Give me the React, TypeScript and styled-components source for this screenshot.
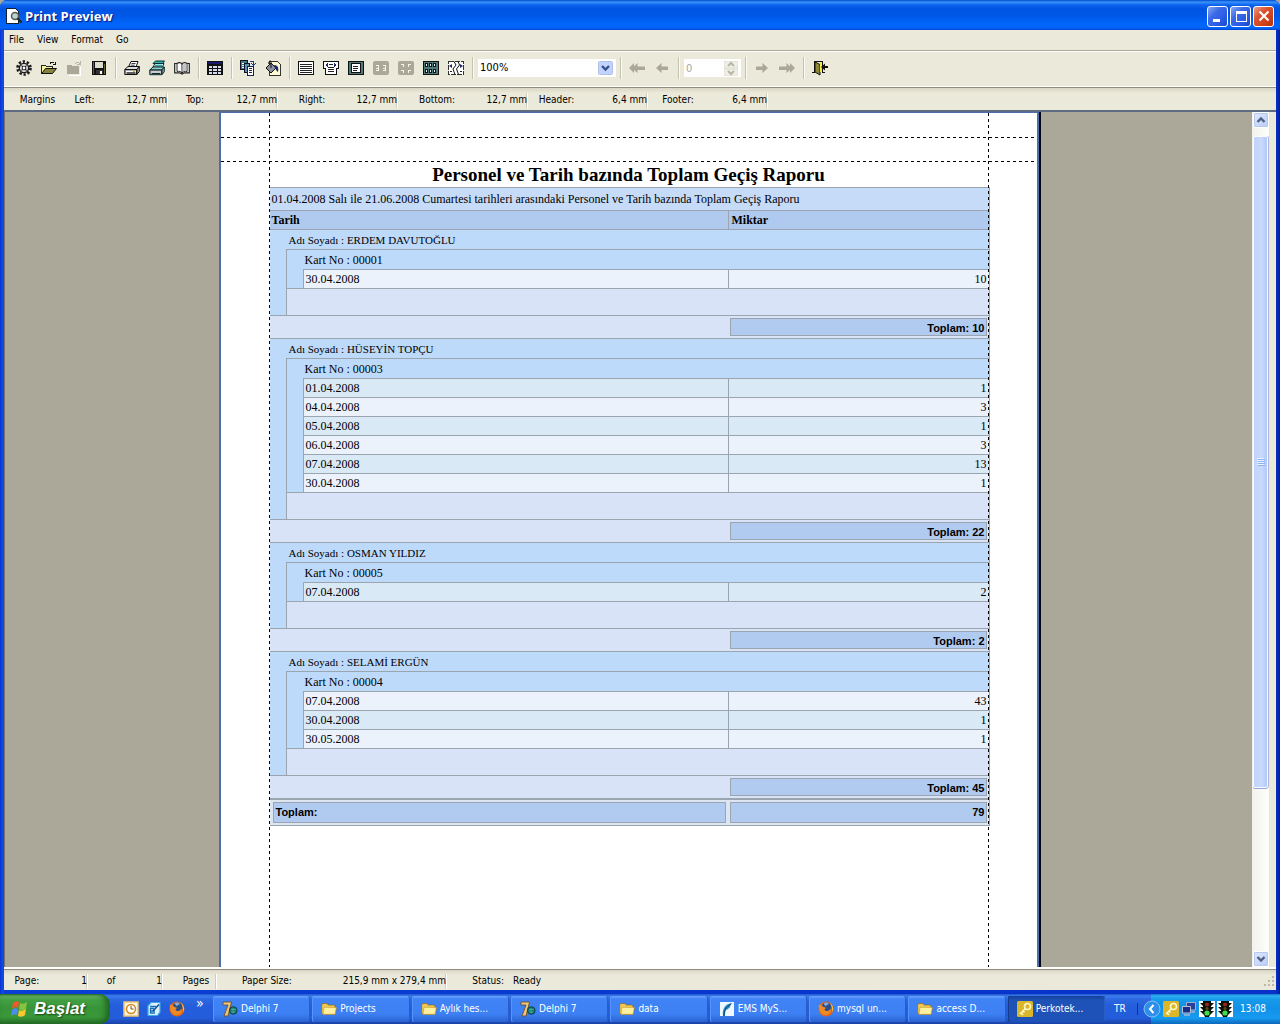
import React from "react";
import styled, { createGlobalStyle, css } from "styled-components";

const UI_FONT = `"DejaVu Sans Condensed", "DejaVu Sans", "Liberation Sans", sans-serif`;
const SERIF = `"Liberation Serif", "Times New Roman", serif`;
const FACE = "#ebe9d9";
const RULE = "#9ba5b0";

const GlobalStyle = createGlobalStyle`
  *, *::before, *::after { box-sizing: border-box; }
  body { margin: 0; background: #aca899; }
  button, input, select { font: inherit; color: inherit; margin: 0; }
`;

const Screen = styled.div`
  display: flex;
  flex-direction: column;
  height: 100vh;
  overflow: hidden;
  font-family: ${UI_FONT};
  font-size: 10px;
  line-height: 14px;
  color: #000;
`;

/* ---------- window frame ---------- */

const Window = styled.main`
  flex: 1;
  min-height: 0;
  display: flex;
  flex-direction: column;
  background: linear-gradient(90deg, #0831d9, #1650e0 3px, #0a3fd6 4px, #0831c9 calc(100% - 4px), #001ea0);
  border-radius: 7px 7px 0 0;
`;

const TitleBar = styled.header`
  display: flex;
  align-items: center;
  gap: 3px;
  height: 30px;
  padding: 2px 6px 0;
  border-radius: 7px 7px 0 0;
  background: linear-gradient(#0048cc, #3a94fb 2px, #0c63ee 5px, #0054e3 9px, #0058e8 16px, #0066fb 24px, #0264fa 28px, #0044cc);
`;

const Title = styled.h1`
  flex: 1;
  margin: 0;
  font: 700 13px/18px "Open Sans", "Noto Sans", sans-serif;
  color: #fff;
  text-shadow: 1px 1px 1px #0a1883;
`;

const CaptionButtons = styled.div`
  display: flex;
  gap: 2px;
`;

const CaptionButton = styled.button<{ $close?: boolean }>`
  width: 21px;
  height: 21px;
  padding: 0;
  display: grid;
  place-items: center;
  border: 1px solid #fff;
  border-radius: 3px;
  background: ${(p) =>
    p.$close
      ? "linear-gradient(135deg, #e9a08c, #dc5531 35%, #c93c14 80%, #b23008)"
      : "linear-gradient(135deg, #86a9f2, #3c6be8 35%, #2a5be4 70%, #1a48c8)"};
`;

const Client = styled.div`
  flex: 1;
  min-height: 0;
  margin: 0 4px 4px;
  display: flex;
  flex-direction: column;
  background: ${FACE};
`;

/* ---------- menu and toolbar ---------- */

const MenuBar = styled.nav`
  display: flex;
  align-items: center;
  gap: 1px;
  height: 21px;
  border-bottom: 1px solid #aca899;
`;

const MenuItem = styled.button`
  padding: 0 7px 0 5px;
  border: 0;
  background: none;
`;

const ToolBar = styled.div`
  display: flex;
  align-items: center;
  height: 36px;
  padding: 0 8px 2px;
  border-top: 1px solid #fff;
  border-bottom: 1px solid #fff;
`;

const ToolButton = styled.button`
  width: 25px;
  height: 24px;
  padding: 0 1px 0 0;
  display: grid;
  place-items: center;
  border: 0;
  background: none;
`;

const Separator = styled.span`
  width: 8px;
  height: 22px;
  display: flex;
  justify-content: center;
  &::before {
    content: "";
    width: 2px;
    background: #c5c2b2;
    border-right: 1px solid #fbfaf4;
  }
`;

const ZoomBox = styled.label`
  position: relative;
  width: 140px;
  height: 20px;
  padding: 1px;
`;

const ZoomSelect = styled.select`
  appearance: none;
  width: 138px;
  height: 18px;
  padding: 0 20px 0 2px;
  border: 0;
  border-radius: 0;
  background: #fff;
  font-size: 11px;
`;

const DropGlyph = styled.svg`
  position: absolute;
  right: 4px;
  top: 3px;
  pointer-events: none;
`;

const SpinBox = styled.label`
  position: relative;
  width: 59px;
  height: 20px;
  padding: 1px;
`;

const SpinInput = styled.input`
  appearance: textfield;
  width: 57px;
  height: 18px;
  padding: 0 2px;
  border: 0;
  background: #fff;
  color: #aca899;
  font-size: 11px;
  &::-webkit-inner-spin-button { display: none; }
`;

/* ---------- measured strips ---------- */

const Strip = styled.div<{ $height: number }>`
  display: flex;
  align-items: center;
  height: ${(p) => p.$height}px;
  padding-top: 2px;
  border-top: 1px solid #8f8c7e;
  background: linear-gradient(#d9d6c6, ${FACE} 5px);
`;

const Cell = styled.div<{ $width: number; $rule?: boolean }>`
  display: flex;
  align-items: center;
  width: ${(p) => p.$width}px;
  height: 15px;
  white-space: nowrap;
  ${(p) =>
    p.$rule &&
    css`
      border-right: 1px solid #fff;
      box-shadow: inset -1px 0 #cfccbd;
    `}
`;

const CellLabel = styled.span<{ $width: number }>`
  flex: none;
  width: ${(p) => p.$width}px;
  text-align: center;
`;

const CellValue = styled.span`
  flex: 1;
  text-align: right;
`;

/* ---------- preview area ---------- */

const Preview = styled.section`
  flex: 1;
  min-height: 0;
  display: flex;
  padding-right: 6px;
  border-top: 2px solid #5d6a80;
  border-bottom: 2px solid #fff;
`;

const Desk = styled.div`
  flex: 1;
  min-width: 0;
  display: flex;
  justify-content: center;
  overflow: hidden;
  background: #aca899;
  border-left: 1px solid #77756a;
`;

const Paper = styled.article`
  position: relative;
  flex: none;
  width: 820px;
  padding: 49px 49px 0;
  background: #fff;
  border: solid #4d6ea6;
  border-width: 1px 2px 0;
  box-shadow: 2px 0 #000814;
`;

const Guide = styled.span<{ $vertical?: boolean; $at: number; $far?: boolean }>`
  position: absolute;
  pointer-events: none;
  ${(p) =>
    p.$vertical
      ? css`
          top: 0;
          bottom: 0;
          width: 1px;
          ${p.$far ? "right" : "left"}: ${p.$at}px;
          background: repeating-linear-gradient(#000 0 3px, transparent 3px 6px);
        `
      : css`
          left: 0;
          right: 0;
          height: 1px;
          top: ${p.$at}px;
          background: repeating-linear-gradient(90deg, #000 0 3px, transparent 3px 6px);
        `}
`;

const ReportTitle = styled.h2`
  margin: 0;
  height: 25px;
  font: 700 19px/25px ${SERIF};
  text-align: center;
`;

const Report = styled.table`
  width: 720px;
  table-layout: fixed;
  border-collapse: separate;
  border-spacing: 0;
  border-right: 1px solid ${RULE};
  border-bottom: 1px solid ${RULE};
  font: 12px/16px ${SERIF};
`;

const Row = styled.tr<{ $height: number }>`
  height: ${(p) => p.$height}px;
`;

type Tone = "range" | "head" | "group" | "even" | "odd" | "foot" | "grand";
const tones: Record<Tone, string> = {
  range: "#c6dbf8",
  head: "#b0caef",
  group: "#bddafa",
  even: "#ebf2fc",
  odd: "#d9e9f6",
  foot: "#d8e3f7",
  grand: "#dde5f2",
};

const TD = styled.td<{
  $tone: Tone;
  $indent?: number;
  $top?: number;
  $left?: boolean;
  $right?: boolean;
  $box?: boolean;
  $small?: boolean;
}>`
  padding: 0 2px 0 ${(p) => p.$indent ?? 2}px;
  background: ${(p) => tones[p.$tone]};
  border: 0 solid ${RULE};
  border-top-width: ${(p) => p.$top ?? 1}px;
  border-left-width: ${(p) => (p.$left ? 1 : 0)}px;
  font-size: ${(p) => (p.$small ? 11 : 12)}px;
  text-align: ${(p) => (p.$right ? "right" : "left")};
  vertical-align: middle;
`;

const TotalBox = styled.div<{ $tall?: boolean; $start?: boolean }>`
  height: ${(p) => (p.$tall ? 21 : 18)}px;
  padding: 0 1px 0 2px;
  border: 1px solid ${RULE};
  background: #b0caf0;
  font: 700 11px/${(p) => (p.$tall ? 19 : 18)}px "Liberation Sans", Arial, sans-serif;
  text-align: ${(p) => (p.$start ? "left" : "right")};
`;

/* ---------- scroll bar ---------- */

const ScrollBar = styled.div`
  width: 18px;
  display: flex;
  flex-direction: column;
  padding: 0 1px;
  background: linear-gradient(90deg, #f3f2ec, #fefefb);
  border-right: 1px solid #e0e4f0;
`;

const ArrowButton = styled.button`
  width: 16px;
  height: 16px;
  padding: 0;
  display: grid;
  place-items: center;
  border: 1px solid #fff;
  border-radius: 2px;
  background: linear-gradient(135deg, #e0e9ff, #b9cbf6);
  box-shadow: inset 0 0 0 1px #b4c8f0;
`;

const Track = styled.div`
  flex: 1;
  display: flex;
  flex-direction: column;
  padding-top: 8px;
`;

const Thumb = styled.div`
  height: 80%;
  display: grid;
  place-items: center;
  border: 1px solid #f7faff;
  border-radius: 2px;
  background: linear-gradient(90deg, #c2d4fd, #c9d9fe 60%, #b2c8f6);
  box-shadow: 0 1px #8fa6d6, 1px 0 #a9b9dc;
`;

/* ---------- taskbar ---------- */

const TaskBar = styled.footer`
  display: flex;
  align-items: stretch;
  height: 30px;
  color: #fff;
  background: linear-gradient(#1f55c4, #3b7df0 2px, #2d69e2 5px, #245edb 12px, #245ddb 24px, #1941a5);
`;

const StartButton = styled.button`
  width: 110px;
  display: flex;
  align-items: center;
  gap: 4px;
  padding: 0 0 0 10px;
  border: 0;
  border-radius: 0 10px 10px 0;
  background: linear-gradient(#2c7a2c, #6fbb6c 2px, #43a043 6px, #389438 14px, #3a983a 23px, #27702a);
  box-shadow: inset -4px 0 6px #1e6420;
  font: italic 700 17px/26px "Liberation Sans", sans-serif;
  text-shadow: 1px 1px 2px #14400f;
`;

const QuickLaunch = styled.div`
  width: 102px;
  display: flex;
  align-items: center;
  gap: 7px;
  padding-left: 13px;
`;

const IconButton = styled.button`
  padding: 0;
  border: 0;
  background: none;
  display: grid;
  place-items: center;
`;

const More = styled(IconButton)`
  height: 26px;
  padding-left: 4px;
  align-items: start;
  font-size: 14px;
  line-height: 14px;
`;

const Tasks = styled.div`
  flex: 1;
  min-width: 0;
  display: flex;
  gap: 2px;
  padding: 2px 0 2px 1px;
`;

const Task = styled.button<{ $active?: boolean }>`
  flex: 1 1 0;
  min-width: 0;
  display: flex;
  align-items: center;
  gap: 3px;
  padding: 0 9px;
  border: 0;
  border-radius: 2px;
  white-space: nowrap;
  background: ${(p) =>
    p.$active
      ? "linear-gradient(#143f98, #1e52b7 4px, #1e52b8)"
      : "linear-gradient(#6da2ff, #3f83f7 3px, #3c80f4 18px, #2c62d0)"};
  box-shadow: inset 1px 0 ${(p) => (p.$active ? "#15398c" : "#5795fb")}, inset -1px 0 #2a5cc4;
`;

const Language = styled.span`
  width: 46px;
  padding-left: 9px;
  line-height: 30px;
  background: linear-gradient(#0d3290, #0d3290) 32px 50% / 1px 12px no-repeat;
`;

const Tray = styled.div`
  display: flex;
  align-items: center;
  gap: 2px;
  padding-right: 14px;
  background: linear-gradient(#1372c8, #2fb0f4 2px, #179be8 5px, #1290e8 14px, #169af0 24px, #0d68bb);
`;

const TrayToggle = styled(IconButton)`
  margin-left: -8px;
`;

const Clock = styled.time`
  margin-left: 5px;
`;

/* ---------- drawings ---------- */

const Pic = ({ children, size = 16 }: { children: React.ReactNode; size?: number }) => (
  <svg width={size} height={size} viewBox="0 0 16 16" shapeRendering="crispEdges" aria-hidden="true">
    {children}
  </svg>
);

const Gear = () => (
  <Pic>
    <g shapeRendering="auto" fill="none" stroke="#1a1a1a">
      <circle cx="8" cy="8" r="6.500" strokeWidth="2.600" strokeDasharray="2.300 1.780" />
      <circle cx="8" cy="8" r="4.600" fill="#c9c9c9" strokeWidth="1.400" />
      <circle cx="8" cy="8" r="2" fill="#fff" strokeWidth="1.200" />
      <path d="M8 4v2M8 10v2M4 8h2M10 8h2" stroke="#fff" />
      <path d="M5.500 5.500l1 1M10.500 5.500l-1 1M5.500 10.500l1-1M10.500 10.500l-1-1" />
    </g>
  </Pic>
);

const OpenFolder = () => (
  <Pic>
    <path d="M.5 13.500v-8h4l1 1h6v3" fill="#f7f3a0" stroke="#222" />
    <path d="M.8 13.500l3.700-5h11l-4 5z" fill="#86833a" stroke="#111" shapeRendering="auto" />
    <path d="M9 3.500c1-2 3-2 4.500 0M14.500 1.500v3h-3" fill="none" stroke="#111" />
  </Pic>
);

const GreyFolder = () => (
  <Pic>
    <path d="M1 5h4l1 1h7v8H1z" fill="#aca899" />
    <path d="M9 4c2-3 4-1 5 0M14 1v3h-3" fill="none" stroke="#b9b6a8" />
    <path d="M14 7v8H3" fill="none" stroke="#fff" />
  </Pic>
);

const Disk = () => (
  <Pic>
    <path d="M1 1h14v14H1z" fill="#111" />
    <path d="M4 2h8v6H4z" fill="#dedccf" />
    <path d="M2 2h1v12H2zM13 4h1v10h-1z" fill="#66642f" />
    <path d="M5 10h7v4H5z" fill="#333" />
    <path d="M9 11h2v3H9z" fill="#fff" />
  </Pic>
);

const Printer = () => (
  <Pic>
    <g shapeRendering="auto" stroke="#111">
      <path d="M4.500 7l2.500-5.500h7L12 7z" fill="#fff" />
      <path d="M.8 9.500L4 6.500h11l-2 3z" fill="#ddd" />
      <path d="M.8 9.500h12v5h-12zM12.800 9.500l2.500-3v5l-2.500 3z" fill="#aaa" />
      <path d="M7.500 3.500h4M6.700 5.200h4" strokeWidth=".8" />
      <path d="M2 11.500h10" stroke="#fff" />
      <path d="M3 13h8" />
    </g>
    <path d="M9 11h2v1H9z" fill="#c8b520" />
  </Pic>
);

const PrinterStack = () => (
  <Pic>
    <g shapeRendering="auto" stroke="#0d2d30">
      <path d="M4 3.500l2.500-2.500h9l-2 2.500z" fill="#31b3b0" />
      <path d="M4 7l2-3.500h9L13.500 7z" fill="#fff" />
      <path d="M6 5.300h7.500" stroke="#2aa" strokeWidth="1.400" />
      <path d="M.8 10L4 7h11.300l-2.500 3z" fill="#8fd0cb" />
      <path d="M.8 10h12v4.700h-12zM12.800 10l2.500-3v4.700l-2.500 3z" fill="#999" />
      <path d="M2 12h10" stroke="#fff" />
      <path d="M3 13.500h8" />
    </g>
  </Pic>
);

const Book = () => (
  <Pic>
    <g shapeRendering="auto">
      <path d="M.7 3.500h2C5 2.300 7 2.500 8 4c1-1.500 3-1.700 5.300-.5h2v9.300h-5L8 14l-2.300-1.200h-5z" fill="#fff" stroke="#222" strokeWidth="1.200" />
      <path d="M8 4v9.500M13 3.500v8c-2-.5-4 0-5 1.500M3 3.500v8c2-.5 4 0 5 1.500" fill="none" stroke="#222" />
      <path d="M8.700 5c1-1.200 2.300-1.500 3.600-1.200v7c-1.300-.2-2.600.2-3.600 1z" fill="#c4c4c4" />
    </g>
  </Pic>
);

const Grid = () => (
  <Pic>
    <path d="M0 1h16v14H0z" fill="#111" />
    <path d="M1 2h14v2H1z" fill="#18186e" />
    <path d="M2 6h3v2H2zM6 6h4v2H6zM11 6h3v2h-3zM2 9h3v2H2zM6 9h4v2H6zM11 9h3v2h-3zM2 12h3v2H2zM6 12h4v2H6zM11 12h3v2h-3z" fill="#d6dcec" />
  </Pic>
);

const CopyPages = () => (
  <Pic>
    <path d="M.5.500h7v9h-7z" fill="#3f7c80" stroke="#112" />
    <path d="M2 3.500h4M2 5.500h4M2 7.500h2" stroke="#fff" />
    <path d="M4.500 3.500h5v9h-5z" fill="#5d93a0" stroke="#113" />
    <path d="M7.500 6.500h6v9h-6z" fill="#fff" stroke="#112255" />
    <path d="M9 8.500h3M9 10.500h3M9 12.500h3" stroke="#225" />
    <path d="M10 1.500h3.500v3M11.500 3.500l2 2 2-2" fill="none" stroke="#1c3d86" />
  </Pic>
);

const FillPage = () => (
  <Pic>
    <path d="M4.500 1.500h8l3 3v11h-11z" fill="#fffbd0" stroke="#333" />
    <g shapeRendering="auto">
      <path d="M1 8l5-5 5 5-5 5z" fill="#8a8f9c" stroke="#111" />
      <path d="M6 8V2c0-2-3-1-2 2" fill="none" stroke="#111" />
      <path d="M9 5c4 0 5 3 4 7-2-1-2-3-3-4z" fill="#17276b" />
    </g>
  </Pic>
);

const Lines = () => (
  <Pic>
    <path d="M.5 1.500h15v13H.5z" fill="#fff" stroke="#111" />
    <path d="M2 4.500h12M2 6.500h12M2 8.500h12M2 10.500h12M2 12.500h12" stroke="#222" />
  </Pic>
);

const WidthPage = () => (
  <Pic>
    <path d="M.5 1.500h15v2H.5zM2.500 3.500h11v11h-11z" fill="#fff" stroke="#111" />
    <path d="M.5 1.500h15v7H.5z" fill="#fff" stroke="#111" />
    <path d="M3 8h10v2H3z" fill="#fff" />
    <path d="M6 4.500h4M5 7.500h6M5 9.500h6M5 11.500h6" stroke="#222" />
    <path d="M5 3v4L2 5zM11 3v4l3-2z" fill="#1d2b66" />
  </Pic>
);

const WholePage = () => (
  <Pic>
    <rect x=".5" y="1.500" width="15" height="13" rx="1" fill="#4f7a78" stroke="#111" />
    <path d="M3.500 3.500h9v9h-9z" fill="#fff" stroke="#111" />
    <path d="M5 6.500h5M5 8.500h5M5 10.500h4" stroke="#222" />
  </Pic>
);

const GreyPages = ({ rows }: { rows: number }) => (
  <Pic>
    <rect x="0" y="1" width="16" height="14" rx="2" fill="#aca899" shapeRendering="auto" />
    {rows === 1 ? (
      <path d="M3 5.500h3M3 8h3M3 10.500h3M5.500 5v6M10 5.500h3M10 8h3M10 10.500h3M12.500 5v6" stroke="#f4f3ec" />
    ) : (
      <path d="M3 4.500h3M5.500 4v3M10 4.500h3M10.500 4v3M3 10.500h3M5.500 10v3M10 10.500h3M10.500 10v3" fill="none" stroke="#f4f3ec" />
    )}
  </Pic>
);

const ManyPages = () => (
  <Pic>
    <rect x=".5" y="1.500" width="15" height="13" rx="1" fill="#4f7a78" stroke="#111" />
    <path d="M2.500 3.500h2v3h-2zM6.500 3.500h2v3h-2zM10.500 3.500h2v3h-2zM2.500 9.500h2v3h-2zM6.500 9.500h2v3h-2zM10.500 9.500h2v3h-2z" fill="#e8f2f0" stroke="#112" />
  </Pic>
);

const FitPages = () => (
  <Pic>
    <path d="M.5 1.500h15v13H.5z" fill="#fff" stroke="#333" strokeDasharray="5 1" />
    <g shapeRendering="auto">
      <path d="M6 1.500L8 5l-3 4 2 5.500M10 1.500L11.500 5l-3 4 2 5.500" fill="none" stroke="#111" />
      <path d="M4 4v4L1 6zM12 4v4l3-2z" fill="#1d2b66" />
      <path d="M2 11.500h2M12 11.500h2" stroke="#222" />
    </g>
  </Pic>
);

const GreyArrow = ({ flip, double }: { flip?: boolean; double?: boolean }) => (
  <Pic>
    <g transform={flip ? "translate(16 0) scale(-1 1)" : undefined} fill="#aca899" shapeRendering="auto">
      {double ? (
        <path d="M0 8l5-5v3.500L8.500 3v3.500H16v3.500H8.500V13L5 10v3z" />
      ) : (
        <path d="M2 8l5.500-5v3.500H14V10H7.500v3z" />
      )}
    </g>
  </Pic>
);

const Exit = () => (
  <Pic>
    <path d="M0 12.500h3M2.500 12V1.500h8V12M10 12.500h3" fill="none" stroke="#111" />
    <path d="M3 2l5 2.500V15l-5-3z" fill="#8b883a" stroke="#111" shapeRendering="auto" />
    <path d="M8 2h2v10H8z" fill="#f2e94e" />
    <path d="M9 7l4-3.500V6h3v2h-3v2.500z" fill="#111" shapeRendering="auto" />
  </Pic>
);

const PreviewIcon = () => (
  <Pic>
    <path d="M.5.500h9l3 3v12H.5z" fill="#fff" stroke="#123" />
    <g shapeRendering="auto">
      <circle cx="9" cy="8" r="3.500" fill="#b7d6cf" stroke="#555" strokeWidth="1.500" />
      <path d="M11.500 10.500l4 4" stroke="#222" strokeWidth="2" />
    </g>
  </Pic>
);

const Chevron = ({ up }: { up?: boolean }) => (
  <svg width="10" height="8" viewBox="0 0 10 8" aria-hidden="true">
    <path d={up ? "M1.500 6L5 2.500 8.500 6" : "M1.500 2L5 5.500 8.500 2"} fill="none" stroke="#4d6185" strokeWidth="2.400" />
  </svg>
);

const WindowsFlag = () => (
  <svg width="20" height="20" viewBox="0 0 20 20" aria-hidden="true">
    <path d="M3 4c2-2 4-2 6-1L8 9c-2-1-4-1-6 1z" fill="#f0582c" />
    <path d="M10 4c2 1 4 1 7-1l-1 7c-2 1-4 2-7 0z" fill="#86c440" />
    <path d="M2 11c2-2 4-2 6-1l-1 6c-2-1-4-1-6 1z" fill="#4a8df0" />
    <path d="M9 11c2 1 4 1 7-1l-1 6c-2 2-5 2-7 1z" fill="#fbc92c" />
  </svg>
);

const Folder = () => (
  <svg width="16" height="16" viewBox="0 0 16 16" aria-hidden="true">
    <path d="M.7 4l1-1.500h4L7.500 4H13l1 1v2l1.300.5L14 13.300H2L.7 12z" fill="#f0c850" stroke="#8a6a1c" strokeWidth=".7" />
    <path d="M2 13.300l1-7 12.300.2-1.300 6.800z" fill="#fff0a0" stroke="#c9982c" strokeWidth=".6" />
  </svg>
);

const Delphi = () => (
  <svg width="16" height="16" viewBox="0 0 16 16" aria-hidden="true">
    <path d="M1 1h8.500L6 15H2L6 4H1z" fill="#ecc67c" stroke="#6a4512" strokeWidth=".8" />
    <circle cx="11.300" cy="9.500" r="3.800" fill="#197a72" stroke="#0c3f4c" />
    <path d="M9 8.500h5M9 11h4M11 7v5" stroke="#4fb4a0" strokeWidth=".7" />
  </svg>
);

const Firefox = () => (
  <svg width="16" height="16" viewBox="0 0 16 16" aria-hidden="true">
    <circle cx="8" cy="8" r="7.500" fill="#e0661a" />
    <circle cx="8.500" cy="6.500" r="5" fill="#2c4f86" />
    <path d="M6 2c2-1 4-.5 5 1-1 1-3 1-3 2-1 0-2-1-2-3z" fill="#86aede" />
    <path d="M.8 4c1.500-.5 3 .5 4.500 2l2.700.7-1.500 1.800c1 2.500 4.500 2 6-1 1 3-1 6.500-5 6.500C3 14 .5 9 .8 4z" fill="#f08a24" />
    <path d="M12 2c3 2 4 6 2 9 0-4 0-6-2-9z" fill="#fbc63b" />
  </svg>
);

const Feather = () => (
  <svg width="16" height="16" viewBox="0 0 16 16" aria-hidden="true">
    <path d="M1 1h14v14H1z" fill="#eef8ff" />
    <path d="M4 15C3 8 6 2.500 13.500 2c-2 1.500-2.500 3-2.500 4.500-1.500 0-1 1.500-4 2.500-1 2-1 4-1 6z" fill="#2b8ac4" />
    <path d="M5 15c0-6 2-9 7-12" stroke="#0c4270" fill="none" />
  </svg>
);

const Key = () => (
  <svg width="16" height="16" viewBox="0 0 16 16" aria-hidden="true">
    <rect width="16" height="16" rx="1.500" fill="#d9b62a" />
    <circle cx="10.500" cy="5.500" r="3" fill="none" stroke="#fff8c8" strokeWidth="1.600" />
    <path d="M8.500 7.500L3 13M4 12l2 2M6 10l1.500 1.500" stroke="#fff8c8" strokeWidth="1.500" />
  </svg>
);

const ClockIcon = () => (
  <svg width="16" height="16" viewBox="0 0 16 16" aria-hidden="true">
    <rect x="1" y="1" width="14" height="14" fill="#fdf6e0" stroke="#f0c070" strokeWidth="1.500" />
    <circle cx="8" cy="8" r="4.500" fill="#fff" stroke="#d48a1c" strokeWidth="1.500" />
    <path d="M8 5v3h2.500" fill="none" stroke="#7a4a08" />
  </svg>
);

const DesktopIcon = () => (
  <svg width="16" height="16" viewBox="0 0 16 16" aria-hidden="true">
    <path d="M2 5l3-3.500h9V11l-2.500 3.500H2z" fill="#d8f1fc" stroke="#3fa8e0" strokeWidth="1.200" />
    <path d="M4 5.500h6M9 12H4.500V7.500H8M4.500 10H9" fill="none" stroke="#1a6fb8" strokeWidth="1.300" />
    <path d="M7 10l6-6.500" stroke="#0c4c90" strokeWidth="1.500" />
  </svg>
);

const Network = () => (
  <svg width="16" height="16" viewBox="0 0 16 16" aria-hidden="true">
    <path d="M5.500 1.500h9V9h-9z" fill="#2c3f9c" stroke="#9fb0cc" />
    <path d="M1.500 5.500h8V12h-8z" fill="#1b2d86" stroke="#b5c2d8" />
    <path d="M3 14h6M10.500 11h3.500" stroke="#a9b6cc" strokeWidth="1.500" />
  </svg>
);

const TrafficLight = () => (
  <svg width="16" height="16" viewBox="0 0 16 16" aria-hidden="true">
    <path d="M0 0h16v16H0z" fill="#fff" />
    <path d="M4 0h8v2h3l-3 3v1h3l-3 3v1h3l-4 4-1 2H6l-1-2-4-4h3V9L1 6h3V5L1 2h3z" fill="#0a120a" />
    <circle cx="8" cy="3.500" r="2" fill="#a3221c" />
    <circle cx="8" cy="7.500" r="1.500" fill="#5c4a10" />
    <circle cx="8" cy="12" r="2.600" fill="#3fdc4c" />
  </svg>
);

const TrayArrow = () => (
  <svg width="18" height="18" viewBox="0 0 18 18" aria-hidden="true">
    <circle cx="9" cy="9" r="8" fill="#2f8fe8" stroke="#7cc4fa" />
    <path d="M10.500 5L7 9l3.500 4" fill="none" stroke="#fff" strokeWidth="2" />
  </svg>
);

/* ---------- data ---------- */

type Tool = [label: string, icon: React.ReactNode, disabled?: boolean];

const toolGroups: Tool[][] = [
  [["Design", <Gear />], ["Open", <OpenFolder />], ["Unload", <GreyFolder />, true], ["Save", <Disk />]],
  [["Print", <Printer />], ["Print dialog", <PrinterStack />], ["Page setup", <Book />]],
  [["Report options", <Grid />]],
  [["Copy format", <CopyPages />], ["Background", <FillPage />]],
  [
    ["Actual size", <Lines />],
    ["Page width", <WidthPage />],
    ["Whole page", <WholePage />],
    ["Two pages", <GreyPages rows={1} />, true],
    ["Four pages", <GreyPages rows={2} />, true],
    ["Multiple pages", <ManyPages />],
    ["Fit width", <FitPages />],
  ],
];

const margins = [
  { label: "Top:", value: "12,7 mm", width: 110, labelWidth: 54 },
  { label: "Right:", value: "12,7 mm", width: 120, labelWidth: 68 },
  { label: "Bottom:", value: "12,7 mm", width: 130, labelWidth: 78 },
  { label: "Header:", value: "6,4 mm", width: 120, labelWidth: 57 },
  { label: "Footer:", value: "6,4 mm", width: 120, labelWidth: 60 },
];

const people: { name: string; card: string; total: number; rows: [string, number][] }[] = [
  { name: "ERDEM DAVUTOĞLU", card: "00001", total: 10, rows: [["30.04.2008", 10]] },
  {
    name: "HÜSEYİN TOPÇU",
    card: "00003",
    total: 22,
    rows: [
      ["01.04.2008", 1],
      ["04.04.2008", 3],
      ["05.04.2008", 1],
      ["06.04.2008", 3],
      ["07.04.2008", 13],
      ["30.04.2008", 1],
    ],
  },
  { name: "OSMAN YILDIZ", card: "00005", total: 2, rows: [["07.04.2008", 2]] },
  {
    name: "SELAMİ ERGÜN",
    card: "00004",
    total: 45,
    rows: [
      ["07.04.2008", 43],
      ["30.04.2008", 1],
      ["30.05.2008", 1],
    ],
  },
];

/* Stripes run on through the whole report, not per person. */
let stripe = 0;
const groups = people.map((person) => ({
  ...person,
  rows: person.rows.map(([date, count]) => ({ date, count, tone: (stripe++ % 2 ? "odd" : "even") as Tone })),
}));

const tasks: [string, React.ReactNode][] = [
  ["Delphi 7", <Delphi />],
  ["Projects", <Folder />],
  ["Aylık hes...", <Folder />],
  ["Delphi 7", <Delphi />],
  ["data", <Folder />],
  ["EMS MyS...", <Feather />],
  ["mysql un...", <Firefox />],
  ["access D...", <Folder />],
  ["Perkotek...", <Key />],
];

const ToolIcon = ({ tool: [label, icon, disabled] }: { tool: Tool }) => (
  <ToolButton type="button" aria-label={label} disabled={disabled}>
    {icon}
  </ToolButton>
);

const ReportTable = () => (
  <Report>
    <colgroup>
      <col style={{ width: 16 }} />
      <col style={{ width: 17 }} />
      <col />
      <col style={{ width: 260 }} />
    </colgroup>
    <thead>
      <Row $height={23}>
        <TD $tone="range" colSpan={4}>
          01.04.2008 Salı ile 21.06.2008 Cumartesi tarihleri arasındaki Personel ve Tarih bazında Toplam Geçiş Raporu
        </TD>
      </Row>
      <Row $height={19}>
        <TD as="th" $tone="head" colSpan={3}>Tarih</TD>
        <TD as="th" $tone="head" $left>Miktar</TD>
      </Row>
    </thead>
    {groups.map((g) => (
      <tbody key={g.card}>
        <Row $height={20}>
          <TD $tone="group" $indent={19} $small colSpan={4}>Adı Soyadı : {g.name}</TD>
        </Row>
        <Row $height={20}>
          <TD $tone="group" $top={0} rowSpan={g.rows.length + 2} />
          <TD $tone="group" $indent={18} $left colSpan={3}>Kart No : {g.card}</TD>
        </Row>
        {g.rows.map((r, i) => (
          <Row $height={19} key={r.date}>
            {i === 0 && <TD $tone="group" $top={0} $left rowSpan={g.rows.length} />}
            <TD $tone={r.tone} $left>{r.date}</TD>
            <TD $tone={r.tone} $left $right>{r.count}</TD>
          </Row>
        ))}
        <Row $height={27}>
          <TD $tone="foot" $left colSpan={3} />
        </Row>
        <Row $height={23}>
          <TD $tone="foot" colSpan={3} />
          <TD $tone="foot">
            <TotalBox>Toplam: {g.total}</TotalBox>
          </TD>
        </Row>
      </tbody>
    ))}
    <tfoot>
      <Row $height={27}>
        <TD $tone="grand" $top={2} $indent={3} colSpan={3}>
          <TotalBox $tall $start>Toplam:</TotalBox>
        </TD>
        <TD $tone="grand" $top={2}>
          <TotalBox $tall>79</TotalBox>
        </TD>
      </Row>
    </tfoot>
  </Report>
);

export default function App() {
  return (
    <Screen>
      <GlobalStyle />
      <Window>
        <TitleBar>
          <PreviewIcon />
          <Title>Print Preview</Title>
          <CaptionButtons>
            <CaptionButton type="button" aria-label="Minimize">
              <Pic><path d="M3 11h7v3H3z" fill="#fff" /></Pic>
            </CaptionButton>
            <CaptionButton type="button" aria-label="Maximize">
              <Pic><path d="M3 3h11v11H3zM4 6v7h9V6z" fill="#fff" fillRule="evenodd" /></Pic>
            </CaptionButton>
            <CaptionButton type="button" aria-label="Close" $close>
              <svg width="16" height="16" viewBox="0 0 16 16" aria-hidden="true">
                <path d="M3.500 3.500l9 9M12.500 3.500l-9 9" stroke="#fff" strokeWidth="2" />
              </svg>
            </CaptionButton>
          </CaptionButtons>
        </TitleBar>

        <Client>
          <MenuBar aria-label="Menu">
            {["File", "View", "Format", "Go"].map((m) => (
              <MenuItem type="button" key={m}>{m}</MenuItem>
            ))}
          </MenuBar>

          <ToolBar role="toolbar">
            {toolGroups.map((group, i) => (
              <React.Fragment key={i}>
                {group.map((tool) => (
                  <ToolIcon key={tool[0]} tool={tool} />
                ))}
                <Separator />
              </React.Fragment>
            ))}
            <ZoomBox>
              <ZoomSelect aria-label="Zoom" defaultValue="100%">
                <option>100%</option>
              </ZoomSelect>
              <DropGlyph width="15" height="14" viewBox="0 0 15 14" aria-hidden="true">
                <rect x=".5" y=".5" width="14" height="13" rx="1" fill="#c3d3fb" stroke="#aebfe8" />
                <path d="M4 5l3.500 3.500L11 5" fill="none" stroke="#35508c" strokeWidth="2.400" />
              </DropGlyph>
            </ZoomBox>
            <Separator />
            <ToolIcon tool={["First page", <GreyArrow double />, true]} />
            <ToolIcon tool={["Previous page", <GreyArrow />, true]} />
            <Separator />
            <SpinBox>
              <SpinInput type="number" aria-label="Page number" defaultValue={0} disabled />
              <DropGlyph width="14" height="15" viewBox="0 0 14 15" aria-hidden="true">
                <path d="M0 0h14v7H0zM0 8h14v7H0z" fill="#f0efe6" stroke="#dedccf" />
                <path d="M4 5l3-3 3 3M4 10l3 3 3-3" fill="none" stroke="#b9b6a8" strokeWidth="2" />
              </DropGlyph>
            </SpinBox>
            <Separator />
            <ToolIcon tool={["Next page", <GreyArrow flip />, true]} />
            <ToolIcon tool={["Last page", <GreyArrow flip double />, true]} />
            <Separator />
            <ToolIcon tool={["Close preview", <Exit />]} />
          </ToolBar>

          <Strip $height={23}>
            <Cell $width={164} $rule>
              <CellLabel $width={67}>Margins</CellLabel>
              <CellLabel $width={27}>Left:</CellLabel>
              <CellValue>12,7 mm</CellValue>
            </Cell>
            {margins.map((m) => (
              <Cell key={m.label} $width={m.width} $rule>
                <CellLabel $width={m.labelWidth}>{m.label}</CellLabel>
                <CellValue>{m.value}</CellValue>
              </Cell>
            ))}
          </Strip>

          <Preview>
            <Desk>
              <Paper>
                <ReportTitle>Personel ve Tarih bazında Toplam Geçiş Raporu</ReportTitle>
                <ReportTable />
                <Guide $at={24} />
                <Guide $at={48} />
                <Guide $vertical $at={48} />
                <Guide $vertical $far $at={48} />
              </Paper>
            </Desk>
            <ScrollBar>
              <ArrowButton type="button" aria-label="Scroll up"><Chevron up /></ArrowButton>
              <Track>
                <Thumb>
                  <svg width="8" height="8" viewBox="0 0 8 8" shapeRendering="crispEdges" aria-hidden="true">
                    <path d="M0 .5h7M0 2.500h7M0 4.500h7M0 6.500h7" stroke="#eef4fe" />
                    <path d="M1 1.500h7M1 3.500h7M1 5.500h7M1 7.500h7" stroke="#8cb0f8" />
                  </svg>
                </Thumb>
              </Track>
              <ArrowButton type="button" aria-label="Scroll down"><Chevron /></ArrowButton>
            </ScrollBar>
          </Preview>

          <Strip $height={21}>
            <Cell $width={84} $rule>
              <CellLabel $width={46}>Page:</CellLabel>
              <CellValue>1</CellValue>
            </Cell>
            <Cell $width={75} $rule>
              <CellLabel $width={46}>of</CellLabel>
              <CellValue>1</CellValue>
            </Cell>
            <Cell $width={54} $rule>
              <CellLabel $width={66}>Pages</CellLabel>
            </Cell>
            <Cell $width={230} $rule>
              <CellLabel $width={100}>Paper Size:</CellLabel>
              <CellValue>215,9 mm x 279,4 mm</CellValue>
            </Cell>
            <Cell $width={57}>
              <CellValue>Status:</CellValue>
            </Cell>
            <Cell $width={37}>
              <CellValue>Ready</CellValue>
            </Cell>
            <CellValue>
              <svg width="12" height="14" viewBox="0 2 12 14" shapeRendering="crispEdges" aria-hidden="true">
                <path d="M8 6h2v2H8zM4 10h2v2H4zM8 10h2v2H8zM0 14h2v2H0zM4 14h2v2H4zM8 14h2v2H8z" fill="#bdb9a6" />
              </svg>
            </CellValue>
          </Strip>
        </Client>
      </Window>

      <TaskBar>
        <StartButton type="button"><WindowsFlag />Başlat</StartButton>
        <QuickLaunch>
          <IconButton type="button" aria-label="Outlook"><ClockIcon /></IconButton>
          <IconButton type="button" aria-label="Desktop"><DesktopIcon /></IconButton>
          <IconButton type="button" aria-label="Firefox"><Firefox /></IconButton>
          <More type="button">»</More>
        </QuickLaunch>
        <Tasks>
          {tasks.map(([label, icon], i) => (
            <Task type="button" key={i} $active={i === tasks.length - 1}>
              {icon}
              {label}
            </Task>
          ))}
        </Tasks>
        <Language>TR</Language>
        <Tray>
          <TrayToggle type="button" aria-label="Show hidden icons"><TrayArrow /></TrayToggle>
          <Key />
          <Network />
          <TrafficLight />
          <TrafficLight />
          <Clock>13:08</Clock>
        </Tray>
      </TaskBar>
    </Screen>
  );
}
